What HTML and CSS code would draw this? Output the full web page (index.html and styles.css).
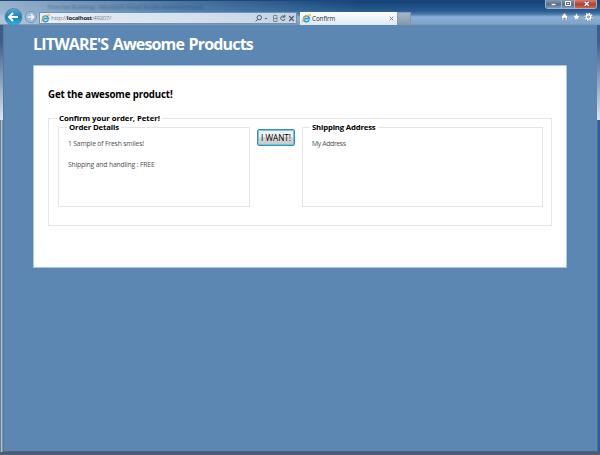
FILE: index.html
```html
<!DOCTYPE html>
<html lang="en">
<head>
<meta charset="utf-8">
<title>Confirm</title>
<link rel="stylesheet" href="styles.css">
</head>
<body>
<div class="window">
  <header class="chrome">
    <div class="titlebar">
      <span class="ghost">Exercise Running - Microsoft Visual Studio (Administrator)</span>
      <div class="controls">
        <span class="control"><svg width="15" height="8"><path d="M5 4.5h5" stroke="#53667d" stroke-width="3"/><path d="M5.5 4.5h4" stroke="#fff" stroke-width="1.4"/></svg></span>
        <span class="control"><svg width="12" height="8"><path d="M3.5 1.5h5v4h-5z" fill="#65758a" stroke="#fff"/><path d="M5 3.5h2" stroke="#dde4ec"/></svg></span>
        <span class="control close"><svg width="23" height="8"><path d="M9.7 1.8l4 4M13.7 1.8l-4 4" stroke="#65404c" stroke-width="3"/><path d="M9.7 1.8l4 4M13.7 1.8l-4 4" stroke="#fff" stroke-width="1.5"/></svg></span>
      </div>
    </div>
    <div class="toolbar">
      <svg class="nav" width="36" height="18" viewBox="0 0 36 18">
        <defs><linearGradient id="blue" x2="0" y2="1"><stop stop-color="#55a8cf"/><stop offset=".5" stop-color="#1782b7"/><stop offset="1" stop-color="#35b5dc"/></linearGradient></defs>
        <circle cx="10.5" cy="9" r="8.5" fill="url(#blue)" stroke="#557e9f" stroke-width=".8"/>
        <path d="M6.5 9h8.5M10 5l-4 4 4 4" fill="none" stroke="#fff" stroke-width="2"/>
        <circle cx="27.8" cy="9" r="5.6" fill="#a3bdd7" stroke="#7891ad"/>
        <path d="M24.7 9h5.5M28 6.3L30.7 9 28 11.7" fill="none" stroke="#edf4fb" stroke-width="1.4"/>
      </svg>
      <div class="address">
        <svg class="ie" width="9" height="9" viewBox="0 0 9 9"><path d="M7.1 6.2A2.9 2.9 0 1 1 7.4 4.6H2.2" fill="none" stroke="#299edb" stroke-width="1.7"/><path d="M1 8C-.6 6.5 4.5.3 8 .8q.8.3.2 1.5" fill="none" stroke="#e5b631" stroke-width="1.2"/></svg>
        <span class="url">http://<b>localhost</b>:49207/</span>
        <svg class="tools" width="40" height="9" viewBox="0 0 40 9" fill="none" stroke="#505d69"><circle cx="4.3" cy="3.6" r="2.2"/><path d="M2.7 5.3L.7 7.5"/><path d="M9.5 4h3l-1.5 1.5z" fill="#505d69" stroke="none"/><path d="M18.5 1.5h3.5v6h-3.5zM19 4.5h3" stroke="#7c8790"/><path d="M29.5 2.7a2.2 2.2 0 1 0 .5 2.2M29.8.7v2.5h-2.5"/><path d="M34.2 2l4.5 5M38.7 2l-4.5 5" stroke-width="1.2"/></svg>
      </div>
      <div class="tab">
        <svg class="ie" width="9" height="9" viewBox="0 0 9 9"><path d="M7.1 6.2A2.9 2.9 0 1 1 7.4 4.6H2.2" fill="none" stroke="#299edb" stroke-width="1.7"/><path d="M1 8C-.6 6.5 4.5.3 8 .8q.8.3.2 1.5" fill="none" stroke="#e5b631" stroke-width="1.2"/></svg>
        <span class="tab-name">Confirm</span>
        <svg width="5" height="5"><path d="M.7.7l3.6 3.6M4.3.7L.7 4.3" stroke="#777f88"/></svg>
      </div>
      <div class="new-tab"></div>
      <svg class="actions" width="34" height="10" viewBox="0 0 34 10" fill="#fff" stroke="#647d9c" stroke-width=".6"><path d="M1 5L4.5 1 8 5 7 6v3H5.3V6H3.7v3H2V6z"/><path d="M16.5.9l1.2 2.6 2.8.3-2.1 1.9.6 2.9-2.5-1.5L14 8.6l.6-2.9-2.1-1.9 2.8-.3z"/><circle cx="28.5" cy="5" r="2.7" fill="none" stroke="#647d9c" stroke-width="3"/><circle cx="28.5" cy="5" r="3.6" fill="none" stroke="#fff" stroke-width="1.1" stroke-dasharray="1.5 1.3"/><circle cx="28.5" cy="5" r="2.2" fill="none" stroke="#fff" stroke-width="1.5"/></svg>
    </div>
  </header>
  <main class="page">
    <h1>LITWARE'S Awesome Products</h1>
    <section class="panel">
      <h2>Get the awesome product!</h2>
      <fieldset class="order">
        <legend class="order-legend">Confirm your order, Peter!</legend>
        <div class="columns">
          <fieldset class="box">
            <legend class="details-legend">Order Details</legend>
            <p class="sample">1 Sample of Fresh smiles!</p>
            <p class="shipping">Shipping and handling : FREE</p>
          </fieldset>
          <button class="buy" type="button">I WANT!</button>
          <fieldset class="box">
            <legend class="address-legend">Shipping Address</legend>
            <p class="destination">My Address</p>
          </fieldset>
        </div>
      </fieldset>
    </section>
  </main>
</div>
</body>
</html>
```
FILE: styles.css
```css
* { box-sizing: border-box; }
body { margin: 0; font-family: "Open Sans", sans-serif; }
svg { display: block; flex: none; }
.window {
  width: 600px;
  height: 455px;
  padding: 0 3px 4px;
  overflow: hidden;
  background:
    linear-gradient(#58616e, #58616e) 3px 451px / 594px 1px no-repeat,
    linear-gradient(#425b80, #53606f) 0 452px / 600px 3px no-repeat,
    linear-gradient(90deg, #505d6b, #b4cbd9 55%, #55748f) 0 120px / 3px 335px no-repeat,
    linear-gradient(90deg, #676d76 1px, #2460a5 1px) 597px 120px / 3px 335px no-repeat,
    linear-gradient(#385b82, #3d6088 35%, #dce6ef) 0 0 / 600px 120px no-repeat;
}
.chrome {
  height: 25px;
  margin: 0 -3px;
  border-bottom: 1px solid #8298ae;
  background:
    linear-gradient(90deg, rgba(182,204,224,.8), rgba(125,164,200,.5) 30%, transparent 60%),
    linear-gradient(#123f75, #285b91 11px, #4776a9 14px, #8dafd4 17px, #7ca3cd);
}
.titlebar { display: flex; height: 11px; justify-content: space-between; border-top: 1px solid #1d4777; }
.ghost { margin: 2px 0 0 48px; font-size: 6px; line-height: 9px; letter-spacing: -.1px; color: #193858; opacity: .6; filter: blur(.8px); }
.controls { display: flex; width: 52px; height: 9px; margin: -1px 3px 0 0; border: 1px solid #9db0c4; border-top: 0; border-radius: 0 0 3px 3px; overflow: hidden; }
.control { background: linear-gradient(#8498ad, #526f8e 55%, #829bb4); border-right: 1px solid #a7b5c5; }
.close { flex: 1; border: 0; background: linear-gradient(#d47e72, #b93e2e 55%, #d66445); }
.toolbar { display: flex; height: 13px; margin-top: 1px; }
.nav { margin: -4px 0 0 3px; position: relative; }
.address { display: flex; align-items: center; width: 258px; height: 12px; padding: 0 1px 0 1px; border: 1px solid #7290af; background: linear-gradient(90deg, #e9eff5, #d9e4ef 45%, #c3d4e5); }
.url { flex: 1; margin-left: 1px; font-size: 6px; line-height: 9px; color: #777f88; letter-spacing: -.25px; }
.url b { color: #23282e; }
.tab { display: flex; align-items: center; width: 97px; height: 13px; margin-left: 3px; padding: 0 3px 0 2px; background: linear-gradient(#fff, #dce8f4); font-size: 6.2px; line-height: 10px; color: #202a35; }
.tab-name { flex: 1; margin-left: 1px; }
.new-tab { width: 14px; height: 12px; border: 1px solid #8499ac; background: linear-gradient(#a4b7ca, #889eb4); }
.actions { margin: 0 6px 0 auto; }
.page { height: 426px; padding: 9px 30px 0; background: #5b87b2; border-left: 1px solid #5579a0; }
h1 { margin: 0 0 11px -1px; font-size: 16px; line-height: 20px; font-weight: 700; letter-spacing: -.82px; word-spacing: 1px; color: #fff; white-space: nowrap; }
.panel { width: 534px; height: 203px; margin-left: -1px; padding: 21px 14px 0 14px; background: #fff; border: 1px solid #aac6e4; border-radius: 1px; }
h2 { margin: 0; height: 27px; font-size: 9.7px; line-height: 15px; font-weight: 700; letter-spacing: -.13px; color: #000; white-space: nowrap; }
fieldset { margin: 0; min-width: 0; border: 1px solid #e5e5e5; }
.order { height: 112px; padding: 0 9px; }
legend { height: 9px; padding: 0 2px; font-size: 7.8px; line-height: 9px; font-weight: 700; letter-spacing: -.06px; color: #000; white-space: nowrap; }
.order-legend { margin-left: -1px; }
.details-legend { margin-left: -1px; letter-spacing: -.15px; }
.address-legend { margin-left: -2px; letter-spacing: -.2px; }
.columns { display: grid; grid-template-columns: 192px 38px 241px; column-gap: 7px; }
.box { height: 84px; padding: 0 9px; }
p { margin: 0; font-size: 6.8px; line-height: 10px; letter-spacing: -.17px; color: #505050; white-space: nowrap; }
.sample, .destination { margin-top: 7px; }
.shipping { margin-top: 11px; }
.destination { letter-spacing: -.33px; }
.buy { width: 38px; height: 17px; margin-top: 6px; padding: 0; border: 1px solid #3e8fae; border-radius: 2px; box-shadow: inset 0 0 0 1px #70c7e5; background: linear-gradient(#f1f1f1 45%, #d8d8d8 50%, #cacaca); font-family: "Open Sans", sans-serif; font-size: 8.2px; line-height: 13px; color: #000; white-space: nowrap; }
```
